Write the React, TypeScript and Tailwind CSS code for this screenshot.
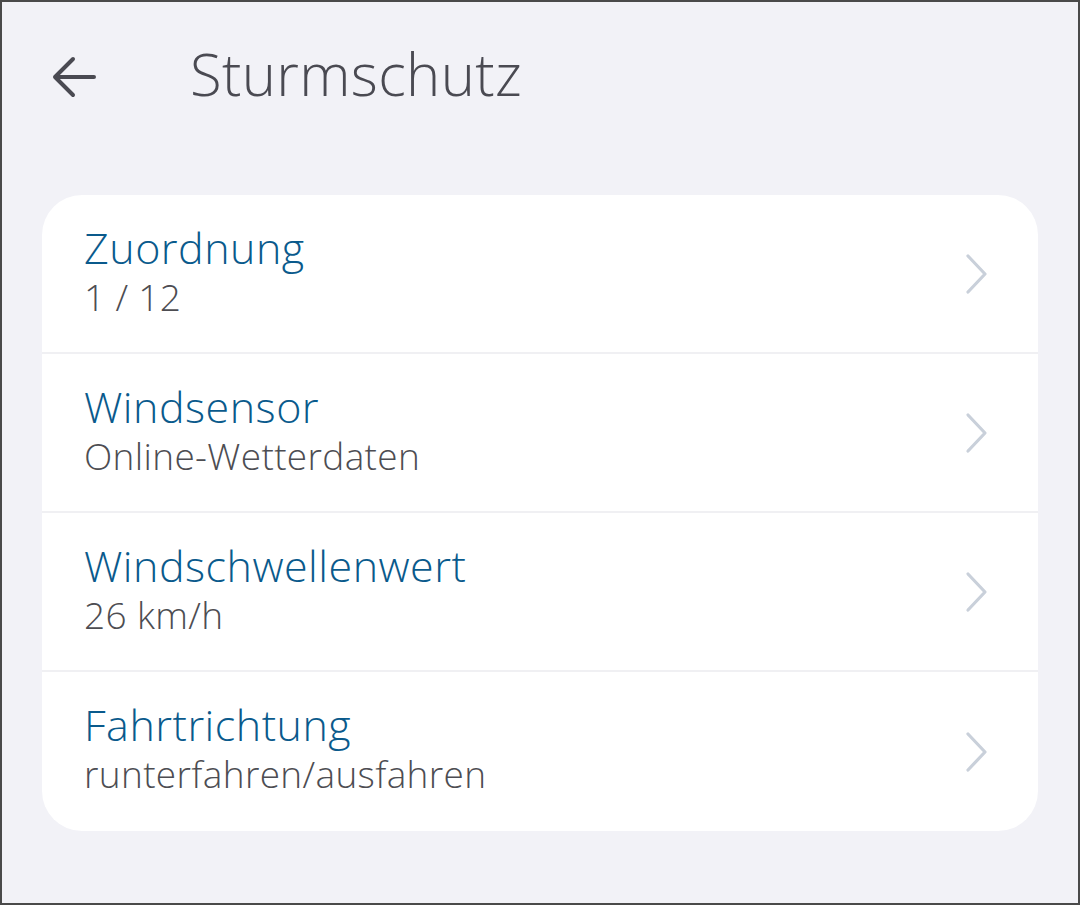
import React from "react";

const rows = [
  { title: "Zuordnung", sub: "1 / 12" },
  { title: "Windsensor", sub: "Online-Wetterdaten" },
  { title: "Windschwellenwert", sub: "26 km/h" },
  { title: "Fahrtrichtung", sub: "runterfahren/ausfahren" },
];

function Chevron() {
  return (
    <svg width="24" height="42" viewBox="0 0 24 42" fill="none">
      <path d="M4 3 L21 21 L4 39" stroke="#c9d0da" strokeWidth="3.2" strokeLinecap="round" strokeLinejoin="round" />
    </svg>
  );
}

export default function App() {
  return (
    <div
      className="w-[1080px] h-[905px] bg-[#f2f2f7] border-2 border-[#4a4a4a] flex flex-col"
      style={{ fontFamily: "'Open Sans', sans-serif" }}
    >
      <div className="h-[193px] flex items-start pl-[49px] pt-[43px]">
        <svg width="46" height="42" viewBox="0 0 46 42" fill="none" className="mt-[11px] shrink-0">
          <path d="M43 21 H4 M22 3 L4 21 L22 39" stroke="#4a4a52" strokeWidth="4" strokeLinecap="round" strokeLinejoin="round" />
        </svg>
        <div className="ml-[93px] text-[58px] leading-[58px] font-light tracking-[0.35px] text-[#4a4a52]">Sturmschutz</div>
      </div>
      <div className="mx-[40px] bg-white rounded-[40px] overflow-hidden">
        {rows.map((r, i) => (
          <div
            key={r.title}
            className={
              "h-[159px] flex items-start pl-[42px] pr-[50px] pt-[31px] " +
              (i < rows.length - 1 ? "border-b-2 border-[#f0f0f3]" : "")
            }
          >
            <div className="flex-1 flex flex-col">
              <div className="text-[43px] leading-[44px] font-light tracking-[0.5px] text-[#0a5a8c]">{r.title}</div>
              <div className="text-[37px] leading-[44px] font-light tracking-[0.35px] text-[#4d4d52] mt-[5px]">{r.sub}</div>
            </div>
            <div className="self-stretch flex items-center -mt-[31px]">
              <Chevron />
            </div>
          </div>
        ))}
      </div>
    </div>
  );
}
